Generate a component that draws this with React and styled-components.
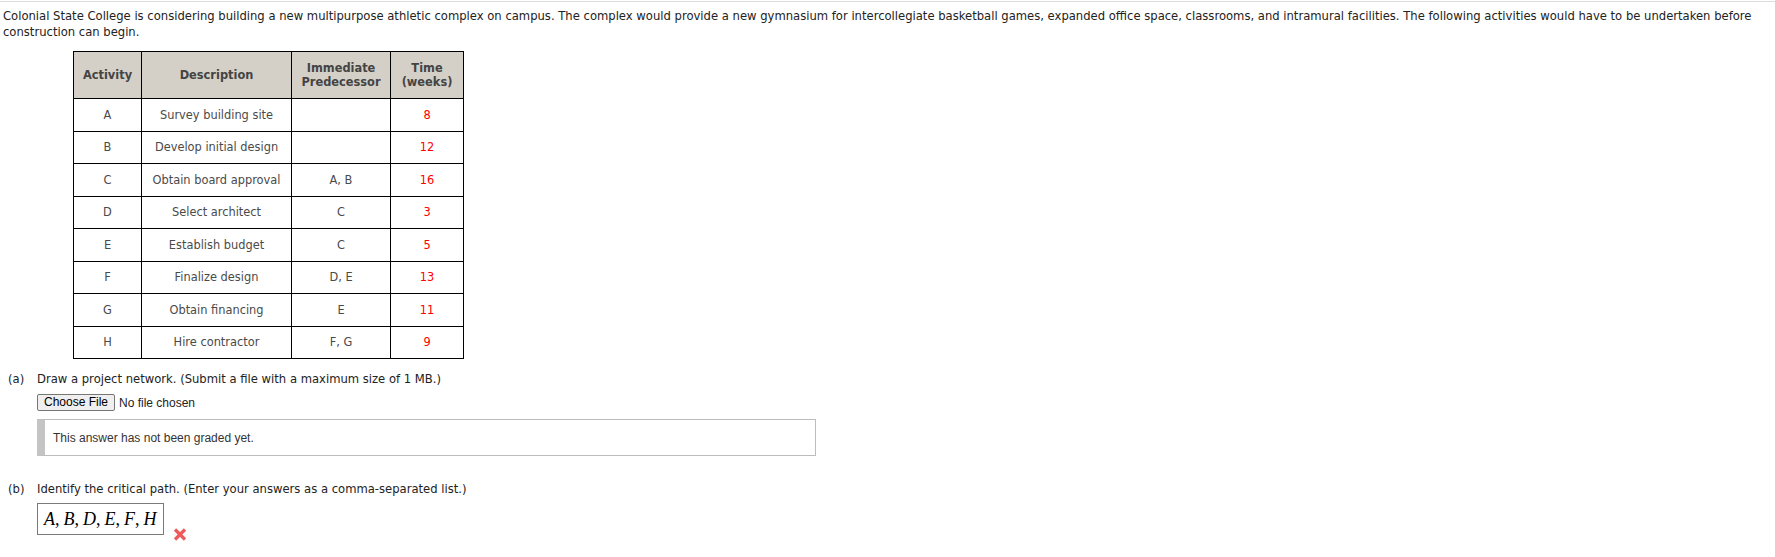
import React from "react";
import styled, { createGlobalStyle } from "styled-components";

const Global = createGlobalStyle`
  html, body { margin: 0; padding: 0; background: #fff; }
  body { font-family: "DejaVu Sans", Verdana, sans-serif; }
`;

const Page = styled.div`
  border-top: 1px solid #dcdcdc;
  margin-top: 1px;
  padding: 0 3px;
  color: #222;
  font-size: 11.6px;
`;

const Intro = styled.p`
  margin: 0;
  padding-top: 7px;
  line-height: 15.5px;
`;

const Table = styled.table`
  border-collapse: collapse;
  margin: 11px 0 0 70px;
  font-size: 11.4px;
  color: #4a4a4a;
`;

const Th = styled.th`
  background: #d4d0c8;
  border: 1px solid #000;
  height: 47px;
  padding: 0 4px;
  width: ${(p) => p.$w}px;
  box-sizing: border-box;
  font-weight: bold;
  color: #444;
  line-height: 14px;
  text-align: center;
`;

const Row = styled.tr`
  height: 32.5px;
`;

const Td = styled.td`
  border: 1px solid #000;
  text-align: center;
  padding: 0 4px;
  color: ${(p) => (p.$red ? "#f00" : "#4a4a4a")};
`;

const Part = styled.div`
  display: grid;
  grid-template-columns: 34px 1fr;
  margin-top: ${(p) => p.$mt}px;
`;

const Label = styled.div`
  padding-left: 5px;
  line-height: 15px;
`;

const Body = styled.div`
  display: flex;
  flex-direction: column;
  align-items: flex-start;
`;

const Prompt = styled.div`
  line-height: 15px;
`;

const FileRow = styled.div`
  display: flex;
  align-items: center;
  margin-top: 7px;
  font-family: "Liberation Sans", Arial, sans-serif;
  font-size: 12px;
  color: #222;
`;

const FileButton = styled.button`
  font-family: "Liberation Sans", Arial, sans-serif;
  font-size: 12px;
  height: 17px;
  width: 78px;
  padding: 0;
  border: 1px solid #767676;
  border-radius: 2px;
  background: #efefef;
  color: #000;
  line-height: 15px;
  margin-right: 4px;
`;

const Feedback = styled.div`
  margin-top: 8px;
  width: 779px;
  height: 37px;
  box-sizing: border-box;
  border: 1px solid #bdbdbd;
  border-left: 8px solid #c4c4c4;
  display: flex;
  align-items: center;
  padding-left: 8px;
  font-family: "Liberation Sans", Arial, sans-serif;
  font-size: 12px;
  color: #333;
`;

const AnswerRow = styled.div`
  display: flex;
  align-items: flex-start;
  margin-top: 6px;
`;

const AnswerBox = styled.div`
  width: 127px;
  height: 32px;
  box-sizing: border-box;
  border: 1px solid #7a7a7a;
  display: flex;
  align-items: center;
  padding-left: 6px;
  font-family: "Liberation Serif", "Times New Roman", serif;
  font-size: 18px;
  color: #000;
`;

const MathVar = styled.i`
  font-style: italic;
`;

const Comma = styled.span`
  margin-right: 4px;
`;

const WrongMark = styled.svg`
  display: block;
  flex: none;
  margin: 25px 0 0 9px;
`;

const rows = [
  ["A", "Survey building site", "", "8"],
  ["B", "Develop initial design", "", "12"],
  ["C", "Obtain board approval", "A, B", "16"],
  ["D", "Select architect", "C", "3"],
  ["E", "Establish budget", "C", "5"],
  ["F", "Finalize design", "D, E", "13"],
  ["G", "Obtain financing", "E", "11"],
  ["H", "Hire contractor", "F, G", "9"],
];

const answer = ["A", "B", "D", "E", "F", "H"];

export default function App() {
  return (
    <>
      <Global />
      <Page>
        <Intro>
          Colonial State College is considering building a new multipurpose athletic complex on campus. The complex would
          provide a new gymnasium for intercollegiate basketball games, expanded office space, classrooms, and intramural
          facilities. The following activities would have to be undertaken before construction can begin.
        </Intro>
        <Table>
          <thead>
            <tr>
              <Th $w={68}>Activity</Th>
              <Th $w={150}>Description</Th>
              <Th $w={99}>
                Immediate
                <br />
                Predecessor
              </Th>
              <Th $w={73}>
                Time
                <br />
                (weeks)
              </Th>
            </tr>
          </thead>
          <tbody>
            {rows.map((r) => (
              <Row key={r[0]}>
                <Td>{r[0]}</Td>
                <Td>{r[1]}</Td>
                <Td>{r[2]}</Td>
                <Td $red>{r[3]}</Td>
              </Row>
            ))}
          </tbody>
        </Table>
        <Part $mt={13}>
          <Label>(a)</Label>
          <Body>
            <Prompt>Draw a project network. (Submit a file with a maximum size of 1 MB.)</Prompt>
            <FileRow>
              <FileButton type="button">Choose File</FileButton>
              <span>No file chosen</span>
            </FileRow>
            <Feedback>This answer has not been graded yet.</Feedback>
          </Body>
        </Part>
        <Part $mt={26}>
          <Label>(b)</Label>
          <Body>
            <Prompt>Identify the critical path. (Enter your answers as a comma-separated list.)</Prompt>
            <AnswerRow>
              <AnswerBox>
                {answer.map((a, i) => (
                  <React.Fragment key={a}>
                    <MathVar>{a}</MathVar>
                    {i < answer.length - 1 && <Comma>,</Comma>}
                  </React.Fragment>
                ))}
              </AnswerBox>
              <WrongMark width="14" height="13" viewBox="0 0 14 13">
                <path d="M2 1.5 L12 11.5 M12 1.5 L2 11.5" stroke="#ee5a5a" strokeWidth="3.2" fill="none" />
              </WrongMark>
            </AnswerRow>
          </Body>
        </Part>
      </Page>
    </>
  );
}
